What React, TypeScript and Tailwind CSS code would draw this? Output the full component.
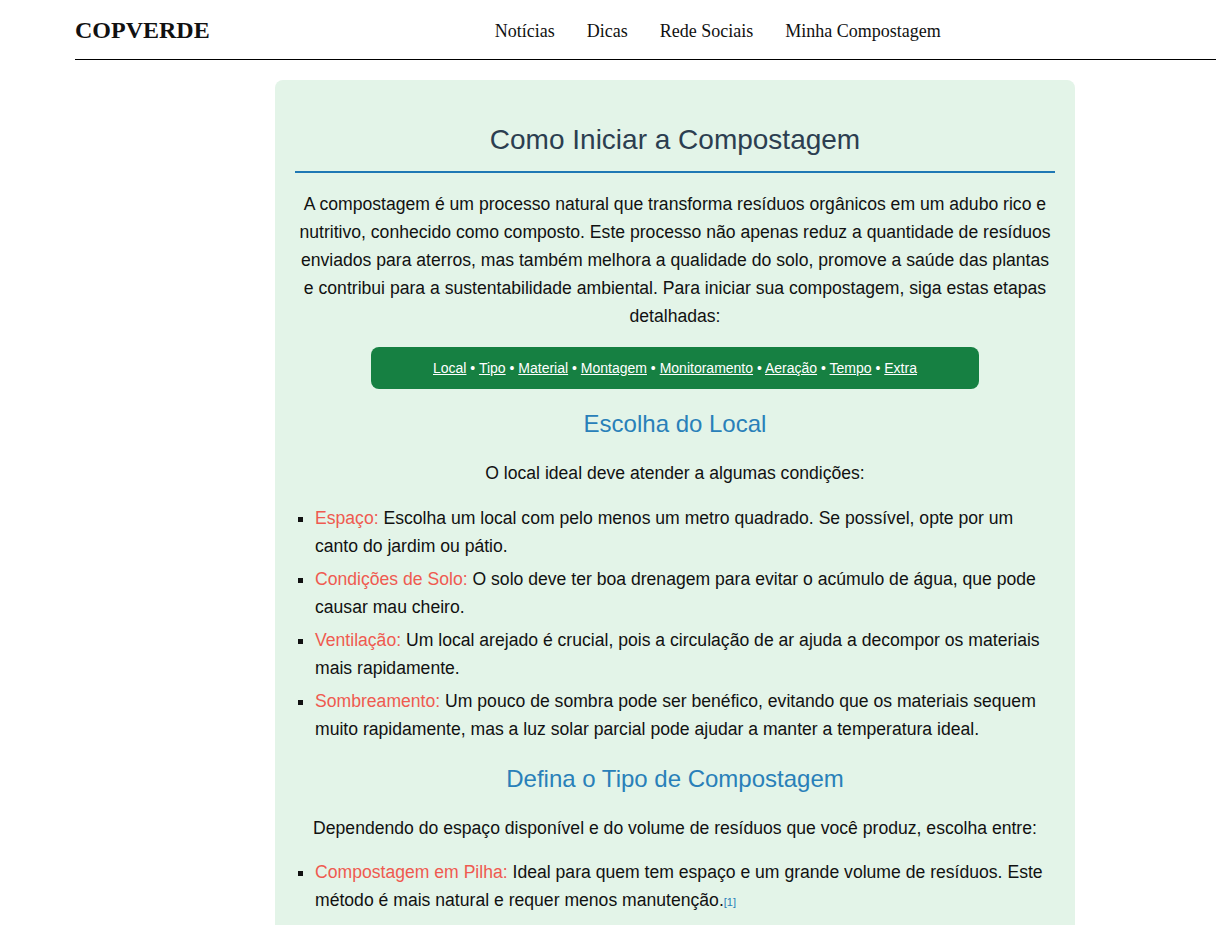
import React from 'react';

const navLinks = ['Notícias', 'Dicas', 'Rede Sociais', 'Minha Compostagem'];
const jumpLinks = ['Local', 'Tipo', 'Material', 'Montagem', 'Monitoramento', 'Aeração', 'Tempo', 'Extra'];

const localItems = [
  { label: 'Espaço:', text: 'Escolha um local com pelo menos um metro quadrado. Se possível, opte por um canto do jardim ou pátio.' },
  { label: 'Condições de Solo:', text: 'O solo deve ter boa drenagem para evitar o acúmulo de água, que pode causar mau cheiro.' },
  { label: 'Ventilação:', text: 'Um local arejado é crucial, pois a circulação de ar ajuda a decompor os materiais mais rapidamente.' },
  { label: 'Sombreamento:', text: 'Um pouco de sombra pode ser benéfico, evitando que os materiais sequem muito rapidamente, mas a luz solar parcial pode ajudar a manter a temperatura ideal.' },
];

function Item({ label, text, note }: { label: string; text: string; note?: string }) {
  return (
    <li className="mb-[5px]">
      <span className="text-[#ef5a50]">{label}</span> {text}
      {note && <span className="text-[11px] text-[#2980b9]">{note}</span>}
    </li>
  );
}

export default function App() {
  return (
    <div className="min-h-screen bg-white font-['Liberation_Sans',Arial,sans-serif] text-[#111]">
      {/* Header */}
      <header className="ml-[75px] h-[60px] border-b border-black flex items-center font-['Liberation_Serif','Times_New_Roman',serif]">
        <div className="text-[24px] font-bold leading-none">COPVERDE</div>
        <nav className="ml-[285px] mt-[3px] flex gap-8 text-[18px]">
          {navLinks.map((l) => (
            <a key={l} className="cursor-pointer">{l}</a>
          ))}
        </nav>
      </header>

      {/* Content */}
      <main className="w-[800px] ml-[275px] mt-5 bg-[#e3f4e8] rounded-lg px-5 pt-5 pb-6 text-[17.6px] leading-[28px]">
        <h1 className="mt-[24px] pb-[15px] border-b-2 border-[#1f78b4] text-center text-[28px] leading-[32px] text-[#2c3e50]">
          Como Iniciar a Compostagem
        </h1>
        <p className="mt-[17px] text-center px-1">
          A compostagem é um processo natural que transforma resíduos orgânicos em um adubo rico e nutritivo, conhecido como composto. Este processo não apenas reduz a quantidade de resíduos enviados para aterros, mas também melhora a qualidade do solo, promove a saúde das plantas e contribui para a sustentabilidade ambiental. Para iniciar sua compostagem, siga estas etapas detalhadas:
        </p>

        <div className="w-4/5 mx-auto mt-[17px] bg-[#168042] rounded-lg py-[10px] text-center text-[14px] leading-[22px] text-white">
          {jumpLinks.map((l, i) => (
            <React.Fragment key={l}>
              {i > 0 && ' • '}
              <a className="underline cursor-pointer">{l}</a>
            </React.Fragment>
          ))}
        </div>

        <h2 className="mt-[21px] text-center text-[24px] leading-[28px] text-[#2980b9]">Escolha do Local</h2>
        <p className="mt-[21px] text-center">O local ideal deve atender a algumas condições:</p>
        <ul className="mt-[17px] pl-5 list-[square]">
          {localItems.map((it) => (
            <Item key={it.label} label={it.label} text={it.text} />
          ))}
        </ul>

        <h2 className="mt-[22px] text-center text-[24px] leading-[28px] text-[#2980b9]">Defina o Tipo de Compostagem</h2>
        <p className="mt-[21px] text-center">
          Dependendo do espaço disponível e do volume de resíduos que você produz, escolha entre:
        </p>
        <ul className="mt-4 pl-5 list-[square]">
          <Item
            label="Compostagem em Pilha:"
            text="Ideal para quem tem espaço e um grande volume de resíduos. Este método é mais natural e requer menos manutenção."
            note="[1]"
          />
        </ul>
      </main>
    </div>
  );
}
